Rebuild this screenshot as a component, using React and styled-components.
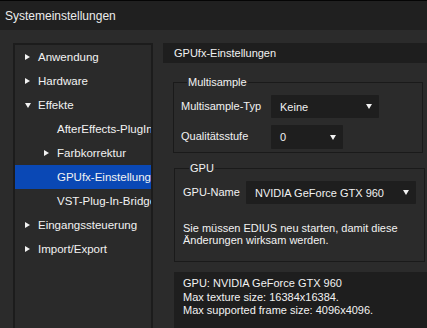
import styled, { createGlobalStyle } from 'styled-components';

const GlobalStyle = createGlobalStyle`
  html, body {
    margin: 0;
    padding: 0;
    background: #2b2b2b;
  }
  * { box-sizing: border-box; }
`;

const Window = styled.div`
  width: 427px;
  height: 328px;
  display: flex;
  flex-direction: column;
  background: #2b2b2b;
  color: #f2f2f2;
  font-family: "Liberation Sans", Arial, sans-serif;
  font-size: 11px;
  overflow: hidden;
`;

const TitleBar = styled.div`
  height: 30px;
  flex-shrink: 0;
  display: flex;
  align-items: center;
  padding-left: 5px;
  background: #202020;
  border-top: 1px solid #050505;
  font-size: 12px;
  color: #ececec;
`;

const Body = styled.div`
  flex: 1;
  display: flex;
  gap: 10px;
  padding: 13px 0 0 13px;
  min-height: 0;
`;

const TreePanel = styled.div`
  width: 140px;
  flex-shrink: 0;
  border: 2px solid #1c1c1c;
  border-bottom: none;
  background: #2a2a2a;
  overflow: hidden;
`;

const TreeRow = styled.div`
  height: 24px;
  display: flex;
  align-items: center;
  padding-left: ${({ $level }) => ($level ? 29 : 10)}px;
  white-space: nowrap;
  font-size: 11.5px;
  background: ${({ $selected }) => ($selected ? '#0a48b5' : 'transparent')};
`;

const ArrowSlot = styled.span`
  width: 13px;
  flex-shrink: 0;
  display: flex;
  align-items: center;
`;

const Right = styled.div`
  flex: 1;
  display: flex;
  flex-direction: column;
  min-width: 0;
  overflow: hidden;
`;

const HeaderBar = styled.div`
  height: 20px;
  flex-shrink: 0;
  display: flex;
  align-items: center;
  padding-left: 11px;
  background: #1e1e1e;
`;

const Content = styled.div`
  flex-shrink: 0;
  display: flex;
  flex-direction: column;
  padding: 13px 0 0 10px;
`;

const Group = styled.fieldset`
  margin: ${({ $top }) => $top || 0}px ${({ $right }) => $right}px 0 ${({ $left }) => $left}px;
  padding: ${({ $pad }) => $pad};
  border: 1px solid #1a1a1a;
  min-width: 0;
`;

const Legend = styled.legend`
  margin-left: 6px;
  padding: 0 1px;
  line-height: 13px;
`;

const FieldRow = styled.div`
  display: flex;
  align-items: center;
  margin-top: ${({ $gap }) => $gap}px;
`;

const Label = styled.div`
  width: ${({ $w }) => $w}px;
  flex-shrink: 0;
  padding-bottom: 2px;
`;

const Select = styled.div`
  width: ${({ $w }) => $w}px;
  height: ${({ $h }) => $h || 23}px;
  display: flex;
  align-items: center;
  justify-content: space-between;
  padding: 0 7px 0 9px;
  background: #1e1e1e;
  border-radius: 1px;
`;

const Note = styled.div`
  margin-top: 18px;
  line-height: 12px;
`;

const InfoBox = styled.div`
  margin: 10px 0 0 1px;
  padding: 5px 9px;
  height: 80px;
  background: #1e1e1e;
  line-height: 13.5px;
`;

const RightArrow = () => (
  <svg width="5" height="6" viewBox="0 0 5 6">
    <path d="M0 0 L5 3 L0 6 Z" fill="#f2f2f2" />
  </svg>
);

const DownArrow = ({ size = 6 }) => (
  <svg width={size} height={size - 1} viewBox="0 0 6 5">
    <path d="M0 0 L6 0 L3 5 Z" fill="#f2f2f2" />
  </svg>
);

const tree = [
  { label: 'Anwendung', arrow: 'right' },
  { label: 'Hardware', arrow: 'right' },
  { label: 'Effekte', arrow: 'down' },
  { label: 'AfterEffects-PlugIn-Bridge', level: 1 },
  { label: 'Farbkorrektur', level: 1, arrow: 'right' },
  { label: 'GPUfx-Einstellungen', level: 1, selected: true },
  { label: 'VST-Plug-In-Bridge', level: 1 },
  { label: 'Eingangssteuerung', arrow: 'right' },
  { label: 'Import/Export', arrow: 'right' },
];

export default function App() {
  return (
    <>
      <GlobalStyle />
      <Window>
        <TitleBar>Systemeinstellungen</TitleBar>
        <Body>
          <TreePanel>
            {tree.map((item) => (
              <TreeRow key={item.label} $level={item.level} $selected={item.selected}>
                <ArrowSlot>
                  {item.arrow === 'down' ? <DownArrow /> : item.arrow ? <RightArrow /> : null}
                </ArrowSlot>
                {item.label}
              </TreeRow>
            ))}
          </TreePanel>
          <Right>
            <HeaderBar>GPUfx-Einstellungen</HeaderBar>
            <Content>
              <Group $left={0} $right={4} $pad="0 7px 3px 7px">
                <Legend>Multisample</Legend>
                <FieldRow $gap={6}>
                  <Label $w={90}>Multisample-Typ</Label>
                  <Select $w={108}>
                    Keine
                    <DownArrow />
                  </Select>
                </FieldRow>
                <FieldRow $gap={7}>
                  <Label $w={90}>Qualitätsstufe</Label>
                  <Select $w={72} $h={24}>
                    0
                    <DownArrow />
                  </Select>
                </FieldRow>
              </Group>
              <Group $top={9} $left={1} $right={2} $pad="0 8px 15px 8px">
                <Legend>GPU</Legend>
                <FieldRow $gap={6}>
                  <Label $w={63}>GPU-Name</Label>
                  <Select $w={171}>
                    NVIDIA GeForce GTX 960
                    <DownArrow />
                  </Select>
                </FieldRow>
                <Note>
                  Sie müssen EDIUS neu starten, damit diese
                  <br />
                  Änderungen wirksam werden.
                </Note>
              </Group>
              <InfoBox>
                GPU: NVIDIA GeForce GTX 960
                <br />
                Max texture size: 16384x16384.
                <br />
                Max supported frame size: 4096x4096.
              </InfoBox>
            </Content>
          </Right>
        </Body>
      </Window>
    </>
  );
}
